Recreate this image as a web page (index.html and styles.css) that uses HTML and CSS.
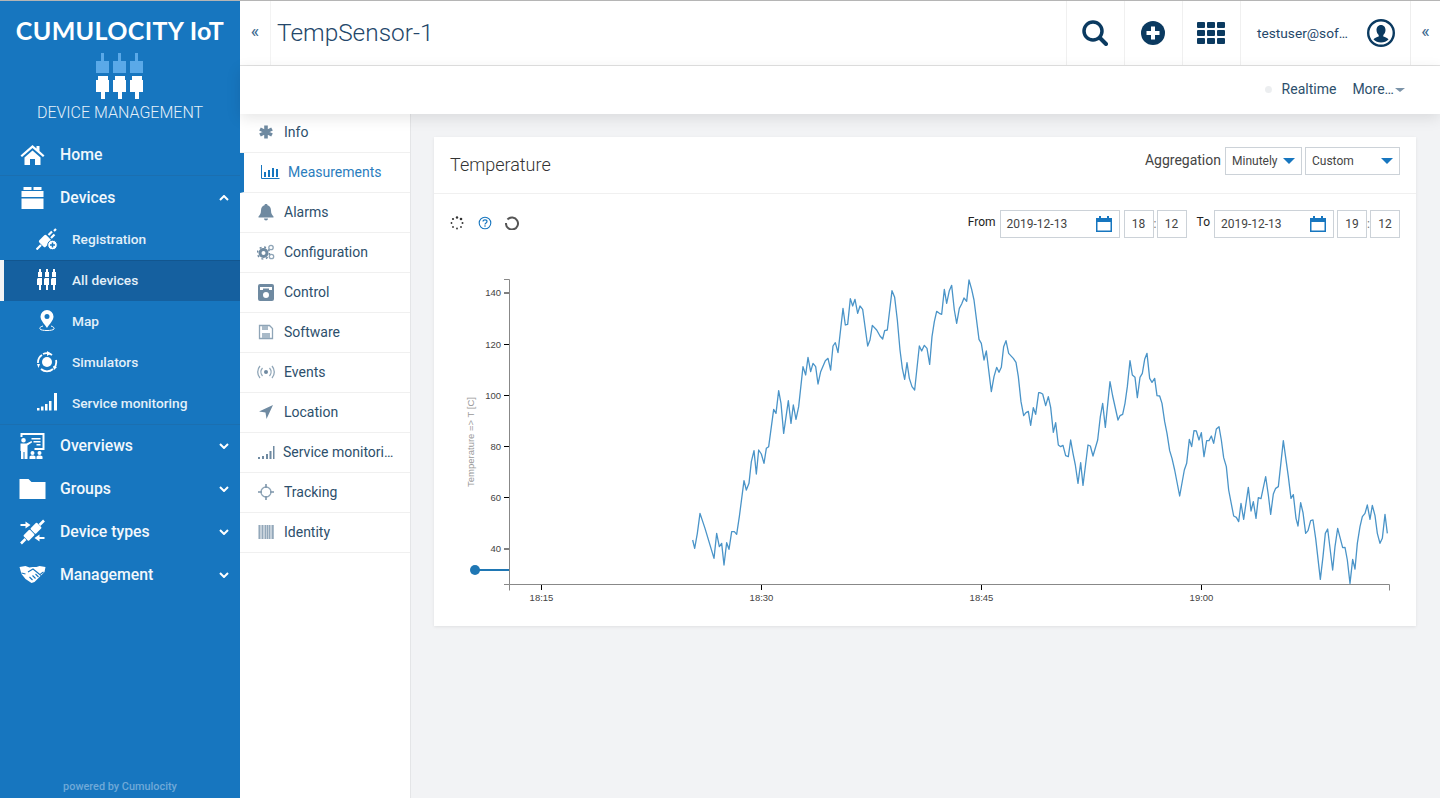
FILE: index.html
```html
<!DOCTYPE html>
<html lang="en">
<head>
  <meta charset="UTF-8">
  <title>TempSensor-1</title>
  <link rel="stylesheet" href="styles.css">
</head>
<body>
  <!-- Left navigator -->
  <aside class="nav">
    <div class="brand">CUMULOCITY IoT</div>
    <svg class="logo" width="50" height="46" viewBox="0 0 50 46">
      <g fill="#5aa9e8">
        <path d="M6 0h3v8h5v12H1V8h5zM23 0h3v8h5v12H18V8h5zM40 0h3v8h5v12H35V8h5z"/>
      </g>
      <g fill="#fff">
        <path d="M3 23h10v4h1v12H10v7H6v-7H1V27h2zM20 23h10v4h1v12h-4v7h-4v-7h-5V27h2zM37 23h10v4h1v12h-4v7h-4v-7h-5V27h2z"/>
      </g>
    </svg>
    <div class="app-name">DEVICE MANAGEMENT</div>

    <ul class="menu">
      <li class="menu-item menu-home">
        <svg class="menu-icon" width="24" height="22" viewBox="0 0 24 22"><path fill="#fff" d="M12 1l4 3.500V2h3v5l5 4.500-1.500 1.500L12 4 1.500 13 0 11.500zM4 13.500l8-7 8 7V21h-5.500v-6h-5v6H4z"/></svg>
        <span>Home</span>
      </li>
      <li class="menu-item">
        <svg class="menu-icon" width="24" height="22" viewBox="0 0 24 22"><path fill="#fff" d="M3 0h8v3H3zM13 0h8v3h-8zM1 4h22v6H1zM1 11.500h22V22H1z"/></svg>
        <span>Devices</span>
        <svg class="chevron" width="10" height="6" viewBox="0 0 10 6"><path d="M1 5l4-4 4 4" /></svg>
      </li>
      <li class="sub-item">
        <svg class="sub-icon" width="22" height="22" viewBox="0 0 22 22"><g fill="#fff"><rect x="4" y="8.500" width="10" height="9" rx="1.500" transform="rotate(-45 9 13)"/></g><path stroke="#fff" stroke-width="2.200" d="M12.500 7l3.500-3.500M15 10l3.500-3.500M18 3l2-2M5 17l-4.500 4.500"/><circle cx="16.500" cy="17" r="4.800" fill="#fff" stroke="#1776bf"/><path stroke="#1776bf" stroke-width="1.500" d="M14 17h5M16.500 14.500v5"/></svg>
        <span>Registration</span>
      </li>
      <li class="sub-item active">
        <svg class="sub-icon" width="22" height="22" viewBox="0 0 22 22"><path fill="#fff" d="M3 0h2v3h1v5H2V3h1zM10 0h2v3h1v5H9V3h1zM17 0h2v3h1v5h-4V3h1zM2 9h4v7H5v5H3v-5H1v-6zM9 9h4v7h-1v5h-2v-5H8v-6zM16 9h4v7h-1v5h-2v-5h-2v-6z"/></svg>
        <span>All devices</span>
      </li>
      <li class="sub-item">
        <svg class="sub-icon" width="22" height="22" viewBox="0 0 22 22"><path fill="#fff" fill-rule="evenodd" d="M11 0a6.500 6.500 0 016.500 6.500c0 4-4 7.500-6.500 11.500C8.500 14 4.500 10.500 4.500 6.500A6.500 6.500 0 0111 0zm0 4a2.500 2.500 0 100 5 2.500 2.500 0 000-5z"/><path fill="none" stroke="#fff" d="M7 16c-3 .8-3.500 2-3 3 1 2 13 2 14 0 .5-1-.5-2.200-3-3"/></svg>
        <span>Map</span>
      </li>
      <li class="sub-item">
        <svg class="sub-icon" width="22" height="22" viewBox="0 0 22 22"><circle cx="11" cy="11" r="5" fill="#fff"/><path fill="none" stroke="#fff" stroke-width="1.800" d="M2 12a9 9 0 014-8M7 3a9 9 0 019 1M20 9a9 9 0 01-2 8M17 18a9 9 0 01-12 0"/><path fill="#fff" d="M11 0l4 2.500L11 5zM1 13h3l-1.500 4zM17 15l4 1-3 3z"/></svg>
        <span>Simulators</span>
      </li>
      <li class="sub-item">
        <svg class="sub-icon" width="22" height="22" viewBox="0 0 22 22"><path fill="#fff" d="M1 16h2.500v2.500H1zM5 14.500h2.500v4H5zM9 12h2.500v6.500H9zM13 9h2.500v9.500H13zM18 1h3v17.500h-3z"/></svg>
        <span>Service monitoring</span>
      </li>
      <li class="menu-item menu-overviews">
        <svg class="menu-icon" width="26" height="26" viewBox="0 0 26 26"><path fill="#fff" fill-rule="evenodd" d="M1 0h24v17H15v-2h8V2H3v2H1z"/><path fill="#fff" d="M12 5h9v1.500h-9zM14 8h7v1.500h-7zM17 11h4v1.500h-4zM4 5a2.300 2.300 0 110 4.600A2.300 2.300 0 014 5zM1 10.500h6l5-2.500.7 1.300L8 12.500V26H5v-7H4v7H1.500v-8H1zM13 18a2 2 0 110 4 2 2 0 010-4zM20 18a2 2 0 110 4 2 2 0 010-4zM10 26v-2c0-1 1-1.500 3-1.500s3 .5 3 1.500v2zM17 26v-2c0-1 1-1.500 3-1.500s3 .5 3 1.500v2z"/></svg>
        <span>Overviews</span>
        <svg class="chevron" width="10" height="6" viewBox="0 0 10 6"><path d="M1 1l4 4 4-4"/></svg>
      </li>
      <li class="menu-item">
        <svg class="menu-icon" width="26" height="20" viewBox="0 0 26 20"><path fill="#fff" d="M0 0h9l3 3h14v17H0z"/></svg>
        <span>Groups</span>
        <svg class="chevron" width="10" height="6" viewBox="0 0 10 6"><path d="M1 1l4 4 4-4"/></svg>
      </li>
      <li class="menu-item">
        <svg class="menu-icon" width="26" height="26" viewBox="0 0 26 26"><g fill="#fff"><rect x="12" y="5.500" width="9" height="7.500" rx="1" transform="rotate(-45 16.500 9.250)"/><rect x="5" y="12.500" width="9" height="7.500" rx="1" transform="rotate(-45 9.500 16.250)"/><path d="M1 5h5V2.500L11 6l-5 3.500V7H1zM25 20h-5v2.500L15 19l5-3.500V18h5z"/></g><path stroke="#fff" stroke-width="2.600" d="M20 6l4.500-4.500M6 20l-4.500 4.500"/></svg>
        <span>Device types</span>
        <svg class="chevron" width="10" height="6" viewBox="0 0 10 6"><path d="M1 1l4 4 4-4"/></svg>
      </li>
      <li class="menu-item">
        <svg class="menu-icon" width="26" height="18" viewBox="0 0 26 18"><path fill="#fff" d="M0 1l6-1 4 1.500 3-.5 4 0 3-1 6 1-1 5-3 3-7 7-3 1-3-2-3-2-4-5z"/><path fill="none" stroke="#1776bf" stroke-width="1.100" d="M8.500 6l5-3 8 6.500M10 11l3 3M13 9.500l3 3M16 8l3 3M2 7l4 1M24 6l-3 2"/></svg>
        <span>Management</span>
        <svg class="chevron" width="10" height="6" viewBox="0 0 10 6"><path d="M1 1l4 4 4-4"/></svg>
      </li>
    </ul>
    <div class="powered">powered by Cumulocity</div>
  </aside>

  <div class="main">
    <!-- Title bar -->
    <header class="topbar">
      <button class="collapse collapse-left">«</button>
      <h1 class="title">TempSensor-1</h1>
      <div class="top-btn">
        <svg width="26" height="26" viewBox="0 0 26 26"><circle cx="11" cy="11" r="9" fill="none" stroke="#0b3a60" stroke-width="3.500"/><path stroke="#0b3a60" stroke-width="4" stroke-linecap="round" d="M18 18l6 6"/></svg>
      </div>
      <div class="top-btn">
        <svg width="24" height="24" viewBox="0 0 24 24"><circle cx="12" cy="12" r="12" fill="#0b3a60"/><path stroke="#fff" stroke-width="4" d="M12 5.500v13M5.500 12h13"/></svg>
      </div>
      <div class="top-btn">
        <svg width="28" height="24" viewBox="0 0 28 22"><g fill="#0b3a60"><rect x="0" y="0" width="8" height="6" rx="1"/><rect x="10" y="0" width="8" height="6" rx="1"/><rect x="20" y="0" width="8" height="6" rx="1"/><rect x="0" y="8" width="8" height="6" rx="1"/><rect x="10" y="8" width="8" height="6" rx="1"/><rect x="20" y="8" width="8" height="6" rx="1"/><rect x="0" y="16" width="8" height="6" rx="1"/><rect x="10" y="16" width="8" height="6" rx="1"/><rect x="20" y="16" width="8" height="6" rx="1"/></g></svg>
      </div>
      <div class="user">
        <span class="user-name">testuser@sof…</span>
        <svg width="28" height="28" viewBox="0 0 28 28"><circle cx="14" cy="14" r="12.800" fill="none" stroke="#0b3a60" stroke-width="2.400"/><path fill="#0b3a60" d="M14 6c3 0 4.500 2.500 4.500 5 0 2-1 4-2.200 5v1.500c2 .8 4.500 1.500 5.200 3-2 2-4.500 3-7.500 3s-5.500-1-7.500-3c.7-1.500 3.200-2.200 5.200-3V16c-1.200-1-2.200-3-2.200-5 0-2.500 1.500-5 4.500-5z"/></svg>
      </div>
      <button class="collapse collapse-right">«</button>
    </header>

    <!-- Action bar -->
    <div class="actionbar">
      <span class="dot"></span>
      <span class="action-label">Realtime</span>
      <span class="action-label action-more">More…<i class="caret caret-gray"></i></span>
    </div>

    <div class="content">
      <!-- Tabs of the device -->
      <ul class="tabs">
        <li class="tab">
          <svg class="tab-icon" width="18" height="18" viewBox="0 0 18 18"><path stroke="#6f8aa1" stroke-width="3.600" d="M9 2.500v13M3 6l12 6M15 6L3 12"/></svg>
          <span>Info</span>
        </li>
        <li class="tab tab-active">
          <svg class="tab-icon" width="20" height="18" viewBox="0 0 20 18"><path fill="none" stroke="#1776bf" d="M1.500 2v13.500h18"/><path fill="#1776bf" d="M4 9h2v5H4zM8 7h2v7H8zM12 5h2v9h-2zM16 6h2v8h-2z"/></svg>
          <span>Measurements</span>
        </li>
        <li class="tab">
          <svg class="tab-icon" width="18" height="18" viewBox="0 0 18 18"><path fill="#6f8aa1" d="M9 1c1 0 1.500.5 1.500 1.200 2.500.6 3.500 2.800 3.500 5.300 0 3 1 4.500 2.500 6v1h-15v-1C3 12 4 10.500 4 7.500c0-2.500 1-4.700 3.500-5.300C7.500 1.500 8 1 9 1zM7 15.500h4a2 2 0 01-4 0z"/></svg>
          <span>Alarms</span>
        </li>
        <li class="tab">
          <svg class="tab-icon" width="18" height="18" viewBox="0 0 18 18"><circle cx="6.500" cy="10" r="3.500" fill="none" stroke="#6f8aa1" stroke-width="3"/><circle cx="6.500" cy="10" r="6" fill="none" stroke="#6f8aa1" stroke-width="1.500" stroke-dasharray="2 2.700"/><circle cx="14" cy="4.500" r="2.200" fill="none" stroke="#8fa5b7" stroke-width="1.300"/><circle cx="14.500" cy="13.500" r="2.200" fill="none" stroke="#8fa5b7" stroke-width="1.300"/></svg>
          <span>Configuration</span>
        </li>
        <li class="tab">
          <svg class="tab-icon" width="18" height="18" viewBox="0 0 18 18"><path fill="#6f8aa1" fill-rule="evenodd" d="M3 1h12a2 2 0 012 2v13a2 2 0 01-2 2H3a2 2 0 01-2-2V3a2 2 0 012-2zm0 3v3h3V5.500h6V7h3V4zm6 5a3 3 0 100 6 3 3 0 000-6z"/></svg>
          <span>Control</span>
        </li>
        <li class="tab">
          <svg class="tab-icon" width="18" height="18" viewBox="0 0 18 18"><path fill="none" stroke="#8fa5b7" stroke-width="1.300" d="M2.500 2.500h10l3 3v10h-13z"/><path fill="#a9bac8" d="M5 3h6v4H5zM5 10h8v5H5z"/></svg>
          <span>Software</span>
        </li>
        <li class="tab">
          <svg class="tab-icon" width="18" height="18" viewBox="0 0 18 18"><circle cx="9" cy="9" r="2" fill="#6f8aa1"/><path fill="none" stroke="#8fa5b7" stroke-width="1.300" d="M5.500 5a6 6 0 000 8M12.500 5a6 6 0 010 8M3 3a9 9 0 000 12M15 3a9 9 0 010 12"/></svg>
          <span>Events</span>
        </li>
        <li class="tab">
          <svg class="tab-icon" width="18" height="18" viewBox="0 0 18 18"><path fill="#6f8aa1" d="M16 2L9.500 16 8.500 9.500 2 8.500z"/></svg>
          <span>Location</span>
        </li>
        <li class="tab tab-tight">
          <svg class="tab-icon" width="18" height="18" viewBox="0 0 18 18"><path fill="#6f8aa1" d="M1 14h2v2H1zM5 13h2v3H5zM9 11h2v5H9zM12.500 8h2v8h-2zM16 3h1.500v13H16z"/></svg>
          <span class="tab-clip">Service monitori…</span>
        </li>
        <li class="tab">
          <svg class="tab-icon" width="18" height="18" viewBox="0 0 18 18"><circle cx="9" cy="9" r="5" fill="none" stroke="#8fa5b7" stroke-width="1.300"/><path fill="#7d95aa" d="M8.200 1h1.600v4H8.200zM8.200 13h1.600v4H8.200zM1 8.200h4v1.600H1zM13 8.200h4v1.600h-4z"/></svg>
          <span>Tracking</span>
        </li>
        <li class="tab">
          <svg class="tab-icon" width="18" height="18" viewBox="0 0 18 18"><path fill="#c5d0da" d="M1 2h16v14H1z"/><path fill="#93a8ba" d="M2 2h1v14H2zM5 2h1v14H5zM8 2h1v14H8zM10 2h1v14h-1zM12 2h1v14h-1zM15 2h1.500v14H15z"/></svg>
          <span>Identity</span>
        </li>
      </ul>

      <!-- Measurements -->
      <div class="page">
        <section class="card">
          <div class="card-head">
            <h2 class="card-title">Temperature</h2>
            <span class="field-label">Aggregation</span>
            <div class="select select-agg">Minutely<i class="caret"></i></div>
            <div class="select select-range">Custom<i class="caret"></i></div>
          </div>
          <div class="toolbar">
            <svg class="tool" width="14" height="14" viewBox="0 0 14 14"><g fill="#333"><circle cx="7" cy="1.500" r="1.200"/><circle cx="11" cy="3" r="1.300"/><circle cx="12.500" cy="7" r="1"/><circle cx="11" cy="11" r=".9"/><circle cx="7" cy="12.500" r=".9"/><circle cx="3" cy="11" r=".9"/><circle cx="1.500" cy="7" r=".9"/><circle cx="3" cy="3" r="1.100"/></g></svg>
            <svg class="tool tool-help" width="14" height="14" viewBox="0 0 14 14"><circle cx="7" cy="7" r="5.800" fill="none" stroke="#1776bf" stroke-width="1.100"/><path fill="none" stroke="#1776bf" stroke-width="1.200" d="M5 5.600C5 4.300 6 3.800 7 3.800s2 .6 2 1.700c0 1.500-2 1.500-2 3"/><circle cx="7" cy="10" r=".8" fill="#1776bf"/></svg>
            <svg class="tool tool-reload" width="14" height="14" viewBox="0 0 14 14"><path fill="none" stroke="#555" stroke-width="2" d="M2.500 3.500A6 6 0 111 7"/></svg>
            <span class="date-label date-from">From</span>
            <div class="input input-date">2019-12-13
              <svg width="16" height="16" viewBox="0 0 16 16"><path fill="#1776bf" fill-rule="evenodd" d="M3 0h2v2h6V0h2v2h3v14H0V2h3zM1.500 6v8.500h13V6z"/></svg>
            </div>
            <div class="input input-num input-wide-gap">18</div>
            <span class="colon">:</span>
            <div class="input input-num">12</div>
            <span class="date-label date-to">To</span>
            <div class="input input-date">2019-12-13
              <svg width="16" height="16" viewBox="0 0 16 16"><path fill="#1776bf" fill-rule="evenodd" d="M3 0h2v2h6V0h2v2h3v14H0V2h3zM1.500 6v8.500h13V6z"/></svg>
            </div>
            <div class="input input-num">19</div>
            <span class="colon">:</span>
            <div class="input input-num">12</div>
          </div>

          <!-- viewBox is in page coordinates -->
          <svg class="chart" width="982" height="376" viewBox="434 250 982 376">
            <g class="axis">
              <path d="M504 279.500h5.500v305M509.500 584.500h880M504 584.500h5.500v6M1389.500 584.500v6"/>
              <path class="tick" d="M504 293h5M504 344.500h5M504 395.500h5M504 446.500h5M504 497.500h5M504 549h5M541.500 585v5M761.500 585v5M981.500 585v5M1201.500 585v5"/>
            </g>
            <g class="tick-text">
              <text x="501" y="296" text-anchor="end">140</text>
              <text x="501" y="347.500" text-anchor="end">120</text>
              <text x="501" y="398.500" text-anchor="end">100</text>
              <text x="501" y="449.500" text-anchor="end">80</text>
              <text x="501" y="500.500" text-anchor="end">60</text>
              <text x="501" y="552" text-anchor="end">40</text>
              <text x="541.500" y="601" text-anchor="middle">18:15</text>
              <text x="761.500" y="601" text-anchor="middle">18:30</text>
              <text x="981.500" y="601" text-anchor="middle">18:45</text>
              <text x="1201.500" y="601" text-anchor="middle">19:00</text>
            </g>
            <text class="axis-title" transform="translate(474 442) rotate(-90)" text-anchor="middle">Temperature =&gt; T [C]</text>
            <path class="marker-line" d="M475 570h34"/>
            <circle class="marker" cx="475" cy="570" r="5"/>
            <polyline class="series" transform="translate(680 270) scale(.33333)" points="38,810 44,835 52,790 60,730 75,775 102,865 110,790 118,830 125,820 132,885 140,818 147,838 155,785 163,785 170,793 178,740 192,632 199,660 207,640 214,575 222,542 229,612 236,540 244,552 252,580 259,535 266,530 281,418 288,430 296,362 303,400 311,490 325,392 333,460 340,405 348,448 356,410 369,290 377,315 384,262 392,305 399,280 407,290 414,342 422,305 436,272 444,265 452,300 459,228 466,218 474,248 489,115 496,165 503,163 511,86 518,108 525,88 533,130 540,108 548,118 563,228 570,210 577,166 590,180 600,198 608,207 614,182 622,180 636,62 644,82 652,150 660,240 667,295 674,328 681,278 688,325 696,350 704,360 718,228 725,243 733,226 741,235 749,283 756,200 763,155 770,124 778,130 785,133 793,58 800,100 808,62 815,46 823,120 830,160 838,115 845,102 852,84 860,94 867,30 875,58 882,90 897,208 904,220 912,270 919,243 934,365 942,320 950,292 957,307 964,292 971,230 978,212 986,250 1000,265 1008,277 1015,320 1023,395 1031,437 1038,428 1045,424 1052,466 1060,413 1067,433 1076,368 1080,368"/>
            <polyline class="series" transform="translate(1030 320) scale(.33333)" points="30,218 38,222 47,257 55,230 62,262 70,337 77,308 85,375 92,380 99,376 107,407 115,410 122,360 129,400 136,435 144,490 152,428 159,496 174,375 181,378 189,408 203,360 211,290 218,250 226,322 240,185 248,228 264,300 270,287 278,283 285,250 292,200 300,122 307,165 315,172 322,233 330,172 337,160 344,118 351,100 359,175 366,187 374,175 381,227 389,228 396,250 404,305 411,340 419,392 426,415 434,450 449,528 463,450 470,430 478,358 485,380 492,332 499,333 507,360 514,338 522,410 530,362 537,362 544,348 551,370 559,327 567,320 574,360 581,413 589,440 596,510 611,588 619,592 626,605 633,550 641,598 655,502 663,573 670,545 678,595 685,533 693,536 707,470 715,525 722,583 730,522 737,505 745,500 760,362 775,470 783,535 790,524 798,595 804,618 812,548 819,578 827,640 834,632 842,602 849,600 857,655 871,778 879,710 886,640 893,627 908,750 915,680 923,625 938,683 945,682 952,720 960,790 968,718 975,747 982,670 990,620 997,590 1005,580 1012,555 1020,598 1027,556 1035,587 1042,640 1050,670 1057,655 1065,583 1072,640"/>
          </svg>
        </section>
      </div>
    </div>
  </div>
</body>
</html>
```

FILE: styles.css
```css
* {
  box-sizing: border-box;
}

html, body {
  height: 100%;
}

body {
  margin: 0;
  height: 798px;
  overflow: hidden;
  display: flex;
  font-family: Roboto, "Liberation Sans", sans-serif;
  color: #2d4f6c;
  background-color: #f2f3f5;
  border-top: 1px solid #b5b5b5;
}

ul {
  list-style: none;
  margin: 0;
  padding: 0;
}

/* Left navigator */
.nav {
  width: 240px;
  flex-shrink: 0;
  height: 797px;
  display: flex;
  flex-direction: column;
  background-color: #1776bf;
  color: #fff;
}

.brand {
  margin-top: 14px;
  text-align: center;
  font-family: Lato, Roboto, sans-serif;
  font-size: 25px;
  line-height: 30px;
  font-weight: 700;
  letter-spacing: 0.35px;
  white-space: nowrap;
}

.logo {
  display: block;
  margin: 8px auto 0;
}

.app-name {
  margin-top: 5px;
  text-align: center;
  font-size: 16px;
  line-height: 18px;
  font-weight: 300;
  color: #e4f0f9;
}

.menu {
  margin-top: 11px;
  flex: 1;
}

.menu-item {
  height: 43px;
  display: flex;
  align-items: center;
  padding: 0 11px 0 20px;
  font-size: 15.8px;
  font-weight: 500;
  color: #f2f8fc;
}

.menu-home {
  box-shadow: inset 0 -1px 0 #1b6fb0;
}

.menu-overviews {
  box-shadow: inset 0 1px 0 #1b6fb0;
}

.menu-icon {
  flex-shrink: 0;
  margin-right: 14px;
  margin-left: -1px;
  width: 27px;
}

.menu-item span {
  flex: 1;
  white-space: nowrap;
}

.chevron {
  fill: none;
  stroke: #fff;
  stroke-width: 2;
}

.sub-item {
  height: 41px;
  display: flex;
  align-items: center;
  padding: 0 0 2px 36px;
  font-size: 13.7px;
  font-weight: 500;
  color: #e3f0f9;
}

.sub-item.active {
  margin-left: 4px;
  padding-left: 32px;
  background-color: #15609f;
  box-shadow: inset 0 1px 0 #12568f, -4px 0 0 #f2f3f5;
}

.sub-icon {
  flex-shrink: 0;
  margin-right: 14px;
}

.powered {
  padding-bottom: 4px;
  text-align: center;
  font-size: 10.9px;
  line-height: 14px;
  font-weight: 500;
  color: #6fa9d8;
}

/* Header */
.main {
  flex: 1;
  min-width: 0;
  display: flex;
  flex-direction: column;
}

.topbar {
  height: 65px;
  display: flex;
  align-items: stretch;
  background-color: #fff;
  border-bottom: 1px solid #e2e2e2;
}

.collapse {
  border: none;
  background: none;
  padding: 0 0 6px;
  font-family: Roboto, sans-serif;
  font-size: 18px;
  color: #3b6a90;
}

.collapse-left {
  width: 31px;
  border-right: 1px solid #f3f3f3;
}

.collapse-right {
  width: 30px;
  border-left: 1px solid #eeeeee;
}

.title {
  flex: 1;
  margin: 0;
  padding: 0 0 2px 6px;
  align-self: center;
  font-size: 24.4px;
  font-weight: 300;
  color: #24476a;
}

.top-btn {
  width: 58px;
  display: flex;
  align-items: center;
  justify-content: center;
  padding-right: 2px;
  border-left: 1px solid #f0f0f0;
}

.user {
  width: 170px;
  padding-left: 16px;
  display: flex;
  align-items: center;
  gap: 17px;
  border-left: 1px solid #f0f0f0;
  font-size: 13.7px;
  color: #24476a;
}

.user-name {
  white-space: nowrap;
  width: 93px;
}

.actionbar {
  height: 48px;
  position: relative;
  z-index: 2;
  display: flex;
  align-items: center;
  justify-content: flex-end;
  padding: 0 35px 2px 0;
  background-color: #fff;
  box-shadow: 0 4px 14px rgba(0, 0, 0, 0.1);
  font-size: 14px;
}

.dot {
  width: 7px;
  height: 7px;
  border-radius: 50%;
  background-color: #eceef0;
  margin-right: 10px;
}

.action-more {
  margin-left: 16px;
}

.caret {
  display: inline-block;
  border-left: 6px solid transparent;
  border-right: 6px solid transparent;
  border-top: 6px solid #1776bf;
}

.caret-gray {
  margin-left: 1px;
  margin-bottom: 2px;
  border-left-width: 5px;
  border-right-width: 5px;
  border-top: 4px solid #7b93a8;
}

.content {
  flex: 1;
  display: flex;
  min-height: 0;
}

/* Tabs */
.tabs {
  width: 171px;
  flex-shrink: 0;
  background-color: #fff;
  border-right: 1px solid #e4e5e7;
}

.tab {
  height: 40px;
  display: flex;
  align-items: center;
  padding-left: 17px;
  padding-bottom: 1px;
  font-size: 14px;
  color: #2d4f6c;
  border-bottom: 1px solid #f0f0f0;
  white-space: nowrap;
}

.tab:first-child {
  height: 39px;
  padding-bottom: 2px;
}

.tab-icon {
  flex-shrink: 0;
  margin-right: 9px;
}

.tab-active {
  padding-left: 16px;
  border-left: 4px solid #1776bf;
  color: #2b7dbd;
}

.tab-active .tab-icon {
  margin-left: 0;
  margin-right: 8px;
}

.tab-tight .tab-icon {
  margin-right: 8px;
}

.tab-clip {
  font-size: 14px;
}

/* Card */
.page {
  flex: 1;
  padding: 23px 24px 0 23px;
}

.card {
  height: 489px;
  background-color: #fff;
  box-shadow: 0 1px 3px rgba(0, 0, 0, 0.08);
}

.card-head {
  height: 57px;
  display: flex;
  align-items: center;
  padding: 0 16px;
  border-bottom: 1px solid #f0f0f0;
}

.card-title {
  flex: 1;
  margin: 0 0 2px;
  font-size: 18px;
  font-weight: 300;
  color: #333;
}

.field-label {
  margin: 0 4px 11px 0;
  font-size: 14px;
  color: #444;
}

.select {
  height: 28px;
  margin-bottom: 8px;
  display: flex;
  align-items: center;
  justify-content: space-between;
  padding: 0 6px;
  border: 1px solid #ccd2d8;
  font-size: 12px;
  color: #444;
}

.select-agg {
  width: 77px;
  margin-right: 3px;
}

.select-range {
  width: 95px;
}

.toolbar {
  height: 59px;
  display: flex;
  align-items: center;
  padding: 0 16px;
}

.tool {
  flex-shrink: 0;
  margin-bottom: 2px;
}

.tool-help {
  margin-left: 14px;
}

.tool-reload {
  margin-left: 13px;
}

.date-label {
  padding-bottom: 4px;
  font-size: 12px;
  color: #222;
}

.date-from {
  margin-left: auto;
  margin-right: 4px;
}

.date-to {
  margin-left: 10px;
  margin-right: 4px;
}

.input {
  height: 28px;
  display: flex;
  align-items: center;
  border: 1px solid #ccd2d8;
  font-size: 12px;
  color: #444;
}

.input-date {
  width: 120px;
  padding: 0 7px 0 6px;
  justify-content: space-between;
}

.input-num {
  width: 30px;
  justify-content: center;
}

.input-date + .input-num {
  margin-left: 3px;
}

.input-date + .input-wide-gap {
  margin-left: 4px;
}

.colon {
  width: 3px;
  font-size: 12px;
  color: #777;
  text-align: center;
}

.chart {
  display: block;
  margin-top: -3px;
}

.axis path {
  fill: none;
  stroke: #888;
  stroke-width: 1;
}

.axis .tick {
  stroke: #000;
}

.tick-text text {
  font-family: "Liberation Sans", Arial, sans-serif;
  font-size: 9.5px;
  fill: #444;
}

.axis-title {
  font-family: "Liberation Sans", Arial, sans-serif;
  font-size: 9.5px;
  fill: #999;
}

.marker-line {
  stroke: #1f77b4;
  stroke-width: 2;
}

.marker {
  fill: #1f77b4;
}

.series {
  fill: none;
  stroke: #4a94c8;
  stroke-width: 1.300;
  vector-effect: non-scaling-stroke;
  stroke-linejoin: round;
}
```
